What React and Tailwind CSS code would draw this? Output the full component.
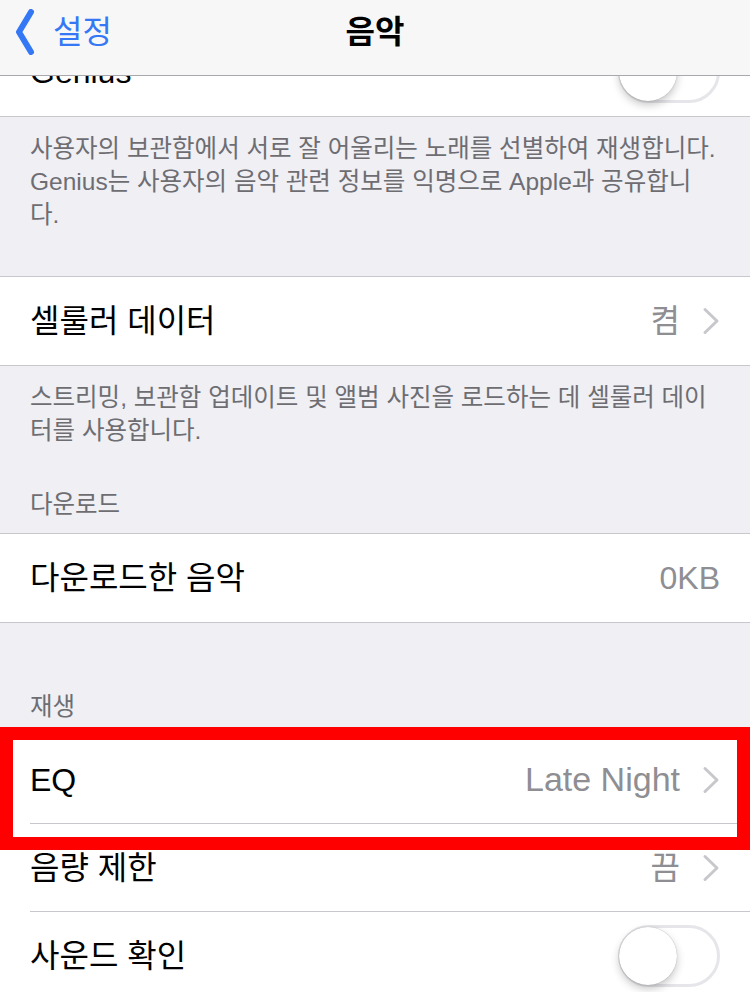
import React from "react";

const font = { fontFamily: '"Liberation Sans", "Noto Sans CJK KR", sans-serif' };

function Chevron() {
  return (
    <svg width="18" height="28" viewBox="0 0 18 28" className="shrink-0">
      <path d="M3 2.5 L15 14 L3 25.5" fill="none" stroke="#c7c7cc" strokeWidth="3" strokeLinecap="round" strokeLinejoin="round" />
    </svg>
  );
}

function Toggle() {
  return (
    <div className="relative w-[102px] h-[62px] rounded-full border-[3px] border-[#e6e6ea] bg-white shrink-0">
      <div className="absolute left-[-2px] top-[-1px] w-[58px] h-[58px] rounded-full bg-white shadow-[0_4px_8px_rgba(0,0,0,0.22),0_0_1px_rgba(0,0,0,0.35)]" />
    </div>
  );
}

function Row({ label, value, chevron, toggle, inset, wide }) {
  return (
    <div className="pl-[30px] bg-white">
      <div className={`h-[88px] flex items-center pr-[30px] ${inset ? "border-b border-[#c8c7cc]" : ""}`}>
        <span className="flex-1 text-[32px] text-black whitespace-nowrap">{label}</span>
        {value && (
          <span className={`${wide ? "text-[34px]" : "text-[32px]"} text-[#8e8e93] whitespace-nowrap`}>{value}</span>
        )}
        {chevron && <span className="ml-[22px] flex items-center"><Chevron /></span>}
        {toggle && <Toggle />}
      </div>
    </div>
  );
}

function Footer({ lines, className }) {
  return (
    <div className={`px-[30px] text-[24.5px] leading-[33px] text-[#6d6d72] ${className}`}>
      {lines.map((l) => (
        <p key={l} className="whitespace-nowrap">{l}</p>
      ))}
    </div>
  );
}

export default function App() {
  return (
    <div style={font} className="relative w-[750px] h-[992px] overflow-hidden bg-[#efeff4]">
      {/* scrolled settings list */}
      <div className="pt-[28px]">
        <div className="border-b border-[#c8c7cc]">
          <Row label="Genius" toggle />
        </div>

        <Footer
          className="pt-[15px] pb-[45px]"
          lines={[
            "사용자의 보관함에서 서로 잘 어울리는 노래를 선별하여 재생합니다.",
            "Genius는 사용자의 음악 관련 정보를 익명으로 Apple과 공유합니",
            "다.",
          ]}
        />

        <div className="border-y border-[#c8c7cc]">
          <Row label="셀룰러 데이터" value="켬" chevron />
        </div>

        <Footer
          className="pt-[15px]"
          lines={[
            "스트리밍, 보관함 업데이트 및 앨범 사진을 로드하는 데 셀룰러 데이",
            "터를 사용합니다.",
          ]}
        />

        <div className="px-[30px] pt-[43px] pb-[13px] text-[24.5px] leading-[30px] text-[#6d6d72]">다운로드</div>

        <div className="border-y border-[#c8c7cc]">
          <Row label="다운로드한 음악" value="0KB" />
        </div>

        <div className="px-[30px] pt-[69px] pb-[13px] text-[24.5px] leading-[30px] text-[#6d6d72]">재생</div>

        <div className="relative border-t border-[#c8c7cc]">
          <Row label="EQ" value="Late Night" chevron inset wide />
          <Row label="음량 제한" value="끔" chevron inset />
          <Row label="사운드 확인" toggle />
          {/* highlight frame around the EQ row */}
          <div className="absolute left-0 right-0 top-[-9px] h-[123px] border-[13px] border-[#ff0000] pointer-events-none" />
        </div>
      </div>

      {/* navigation bar */}
      <div className="absolute top-0 left-0 right-0 h-[76px] bg-[#f7f7f7] border-b border-[#a9a9ad] flex items-center">
        <div className="flex items-center pl-[15px] h-full text-[#3478f6]">
          <svg width="20" height="46" viewBox="0 0 20 46" className="mb-[12px]">
            <path d="M16 3 L4 23 L16 43" fill="none" stroke="#3478f6" strokeWidth="6" strokeLinecap="round" strokeLinejoin="round" />
          </svg>
          <span className="ml-[18px] text-[32px] mb-[12px]">설정</span>
        </div>
        <div className="absolute left-0 right-0 top-0 h-[64px] flex items-center justify-center pointer-events-none">
          <span className="text-[32px] font-semibold text-black">음악</span>
        </div>
      </div>
    </div>
  );
}
